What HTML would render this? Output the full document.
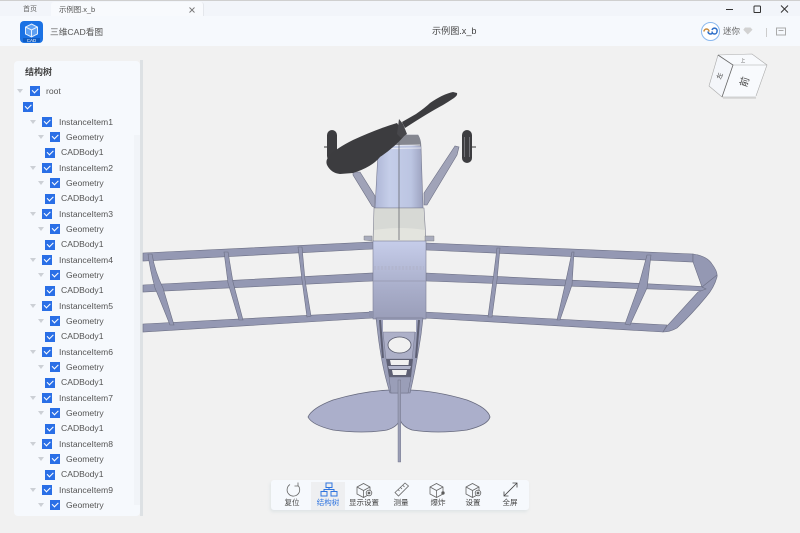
<!DOCTYPE html>
<html><head><meta charset="utf-8">
<style>
html,body{margin:0;padding:0}
body{width:800px;height:533px;overflow:hidden;background:#f1f1f1;position:relative;font-family:"Liberation Sans","Noto Sans CJK SC",sans-serif;color:#444}
.a{position:absolute;white-space:nowrap}
.t{position:absolute;white-space:nowrap;font-size:8.6px;line-height:12px;color:#555;font-family:"Liberation Sans","Noto Sans CJK SC",sans-serif}
.c{position:absolute;width:10px;height:10px;background:#2a6fe6}
.c::after{content:"";position:absolute;left:2px;top:2.2px;width:5px;height:2.5px;border-left:1px solid #fff;border-bottom:1px solid #fff;transform:rotate(-45deg)}
.ar{position:absolute;width:0;height:0;border-left:3.5px solid transparent;border-right:3.5px solid transparent;border-top:4px solid #ccd0d5}
.l{position:absolute;font-size:7.5px;line-height:10px;top:497.5px;color:#444;text-align:center;width:50px}
</style></head><body>
<div class="a" style="left:0;top:0;width:800px;height:46px;background:#f6f9fd"></div>
<div class="a" style="left:0;top:0;width:800px;height:16px;background:#f2f5fa;border-top:1px solid #cfcfcf;box-sizing:border-box"></div>
<div class="a" style="left:51px;top:2px;width:152px;height:14px;background:#f8fafd;border-radius:3px 3px 0 0;border-right:1px solid #e4e7ec"></div>
<div class="a" style="left:23px;top:4px;font-size:7px;line-height:12px;color:#666">首页</div>
<div class="a" style="left:59px;top:4px;font-size:7.4px;line-height:12px;color:#555">示例图.x_b</div>
<svg class="a" style="left:188px;top:6px" width="8" height="8"><path d="M1.500 1.500l5 5M6.500 1.500l-5 5" stroke="#777" stroke-width=".9"/></svg>
<svg class="a" style="left:725px;top:3px" width="70" height="12" fill="none" stroke="#333" stroke-width="1"><path d="M1 6.500h7"/><rect x="29" y="3" width="6.500" height="6.500" rx=".8"/><path d="M56 2.500l7 7M63 2.500l-7 7"/></svg>

<svg class="a" style="left:20px;top:21px" width="24" height="23"><rect width="23" height="22" rx="4" fill="#1b72e4"/><path d="M11.500 3l6 3v7l-6 3-6-3V6z" fill="#5ea0f2" stroke="#e6f0fe" stroke-width="1"/><path d="M11.500 9v7M5.500 6l6 3 6-3" stroke="#e6f0fe" fill="none"/><rect x="3" y="17" width="17" height="4" fill="#0f5cc4"/><text x="11.500" y="20.800" font-size="4.500" fill="#fff" text-anchor="middle" font-family="Liberation Sans">CAD</text></svg>
<div class="a" style="left:50px;top:26px;font-size:8.7px;line-height:13px;color:#555">三维CAD看图</div>
<div class="a" style="left:432px;top:25px;font-size:9.100px;line-height:13px;color:#444">示例图.x_b</div>
<svg class="a" style="left:700px;top:21px" width="22" height="21"><circle cx="10.500" cy="10.500" r="9" fill="#fff" stroke="#8ab8ee" stroke-width="1"/><path d="M4 10.500a2.500 2.500 0 0 1 5 0" fill="none" stroke="#c98a3a" stroke-width="1.500"/><path d="M8 10.500a2.500 2.500 0 0 0 4.500 1.500M12 9a2.500 2.500 0 0 1 5 1.500 2.500 2.500 0 0 1-5 0" fill="none" stroke="#2e6fc9" stroke-width="1.500"/></svg>
<div class="a" style="left:723px;top:25px;font-size:8.500px;line-height:13px;color:#666">迷你</div>
<svg class="a" style="left:743px;top:27px" width="10" height="8"><path d="M2 .5h5.500l2 2.200-4.700 4.800L.3 2.700z" fill="#d2d2d2"/></svg>
<div class="a" style="left:766px;top:28px;width:1px;height:9px;background:#ccc"></div>
<svg class="a" style="left:776px;top:27px" width="10" height="9" fill="none" stroke="#aaa" stroke-width="1"><rect x=".5" y="1" width="9" height="7"/><path d="M2.500 3.500h5"/></svg>

<!-- tree panel -->
<div class="a" style="left:14px;top:61px;width:126px;height:455px;background:#f6f9fd;border-radius:4px"></div>
<div class="a" style="left:134px;top:135px;width:6px;height:370px;background:#f1f4f8"></div>
<div class="a" style="left:140px;top:60px;width:3px;height:456px;background:#dde1e4"></div>
<div class="a" style="left:25px;top:66px;font-size:9px;line-height:13px;font-weight:bold;color:#444">结构树</div>

<div class="ar" style="left:17px;top:89px"></div><div class="c" style="left:30px;top:86px"></div><div class="t" style="left:46px;top:85px">root</div>
<div class="c" style="left:23px;top:102px"></div>

<div class="ar" style="left:30px;top:120px"></div><div class="c" style="left:42px;top:117px"></div><div class="t" style="left:59px;top:116px">InstanceItem1</div>
<div class="ar" style="left:38px;top:135px"></div><div class="c" style="left:50px;top:132px"></div><div class="t" style="left:66px;top:131px">Geometry</div>
<div class="c" style="left:45px;top:147.500px"></div><div class="t" style="left:61px;top:146px">CADBody1</div>

<div class="ar" style="left:30px;top:166px"></div><div class="c" style="left:42px;top:163px"></div><div class="t" style="left:59px;top:162px">InstanceItem2</div>
<div class="ar" style="left:38px;top:181px"></div><div class="c" style="left:50px;top:178px"></div><div class="t" style="left:66px;top:177px">Geometry</div>
<div class="c" style="left:45px;top:193.500px"></div><div class="t" style="left:61px;top:192px">CADBody1</div>

<div class="ar" style="left:30px;top:212px"></div><div class="c" style="left:42px;top:209px"></div><div class="t" style="left:59px;top:208px">InstanceItem3</div>
<div class="ar" style="left:38px;top:227px"></div><div class="c" style="left:50px;top:224px"></div><div class="t" style="left:66px;top:223px">Geometry</div>
<div class="c" style="left:45px;top:239.500px"></div><div class="t" style="left:61px;top:238px">CADBody1</div>

<div class="ar" style="left:30px;top:258px"></div><div class="c" style="left:42px;top:255px"></div><div class="t" style="left:59px;top:254px">InstanceItem4</div>
<div class="ar" style="left:38px;top:273px"></div><div class="c" style="left:50px;top:270px"></div><div class="t" style="left:66px;top:269px">Geometry</div>
<div class="c" style="left:45px;top:285.500px"></div><div class="t" style="left:61px;top:284px">CADBody1</div>

<div class="ar" style="left:30px;top:304px"></div><div class="c" style="left:42px;top:301px"></div><div class="t" style="left:59px;top:300px">InstanceItem5</div>
<div class="ar" style="left:38px;top:319px"></div><div class="c" style="left:50px;top:316px"></div><div class="t" style="left:66px;top:315px">Geometry</div>
<div class="c" style="left:45px;top:331.500px"></div><div class="t" style="left:61px;top:330px">CADBody1</div>

<div class="ar" style="left:30px;top:350px"></div><div class="c" style="left:42px;top:347px"></div><div class="t" style="left:59px;top:346px">InstanceItem6</div>
<div class="ar" style="left:38px;top:365px"></div><div class="c" style="left:50px;top:362px"></div><div class="t" style="left:66px;top:361px">Geometry</div>
<div class="c" style="left:45px;top:377.500px"></div><div class="t" style="left:61px;top:376px">CADBody1</div>

<div class="ar" style="left:30px;top:396px"></div><div class="c" style="left:42px;top:393px"></div><div class="t" style="left:59px;top:392px">InstanceItem7</div>
<div class="ar" style="left:38px;top:411px"></div><div class="c" style="left:50px;top:408px"></div><div class="t" style="left:66px;top:407px">Geometry</div>
<div class="c" style="left:45px;top:423.500px"></div><div class="t" style="left:61px;top:422px">CADBody1</div>

<div class="ar" style="left:30px;top:442px"></div><div class="c" style="left:42px;top:439px"></div><div class="t" style="left:59px;top:438px">InstanceItem8</div>
<div class="ar" style="left:38px;top:457px"></div><div class="c" style="left:50px;top:454px"></div><div class="t" style="left:66px;top:453px">Geometry</div>
<div class="c" style="left:45px;top:469.500px"></div><div class="t" style="left:61px;top:468px">CADBody1</div>

<div class="ar" style="left:30px;top:488px"></div><div class="c" style="left:42px;top:485px"></div><div class="t" style="left:59px;top:484px">InstanceItem9</div>
<div class="ar" style="left:38px;top:503px"></div><div class="c" style="left:50px;top:500px"></div><div class="t" style="left:66px;top:499px">Geometry</div>

<!-- model -->
<svg class="a" style="left:0;top:0" width="800" height="533">
<defs>
<linearGradient id="body" x1="0" y1="0" x2="0" y2="1"><stop offset="0" stop-color="#c6cdea"/><stop offset=".6" stop-color="#a9aeca"/><stop offset="1" stop-color="#9a9eb9"/></linearGradient>
<linearGradient id="cowl" x1="0" y1="0" x2="1" y2="0"><stop offset="0" stop-color="#aeb6d6"/><stop offset=".3" stop-color="#c5cee9"/><stop offset=".75" stop-color="#bcc5e2"/><stop offset="1" stop-color="#9ca2bf"/></linearGradient>
</defs>
<g fill="#9498b3" stroke="#6c6f84" stroke-width=".6">
<!-- left wing spars -->
<path d="M143 253L373 242V249L143 261Z"/>
<path d="M143 285L373 273V281L143 292Z"/>
<path d="M143 324L373 312V318L143 332Z"/>
<!-- left ribs -->
<path d="M148 254L152 254Q155 272 163 288L174 325L170 325Q160 300 155 288Q150 270 148 254Z"/>
<path d="M224 252L228 252L233 282L243 320L239 320L228 283Z"/>
<path d="M298 247L302 247L305 280L311 316L307 317L302 280Z"/>
<!-- right wing spars -->
<path d="M426 243L693 254L693 262L426 250Z"/>
<path d="M426 273L712 287L708 291L426 281Z"/>
<path d="M424 312L667 325L663 332L424 318Z"/>
<!-- right ribs -->
<path d="M497 248L500 248L497 280L492 317L488 317L493 280Z"/>
<path d="M572 252L574 252L572 285L560 320L557 320L565 285Z"/>
<path d="M647 255L651 255L647 288L630 325L625 324L638 288Z"/>
<!-- tip -->
<path d="M693 254Q707 256 712 264Q718 272 717 277Q714 288 706 297Q692 314 677 328Q670 332 663 332L667 326L698 292L706 289L702 287L693 262Z"/>
</g>
<path d="M702 287L717 275" stroke="#6c6f84" stroke-width=".6" fill="none"/>
<!-- gear struts -->
<g fill="#a0a3b8" stroke="#6c6f84" stroke-width=".6">
<path d="M353 172L360 172L375 196V208L372 206L353 175Z"/>
<path d="M424 193L455 146L459 147L457 155L427 205H424Z"/>
</g>
<!-- wheels -->
<rect x="327" y="130" width="10" height="31" rx="5" fill="#3d3d40"/>
<rect x="462" y="130" width="10" height="33" rx="5" fill="#3d3d40"/>
<path d="M464.500 137v20M469.500 137v20" stroke="#808085" stroke-width=".8"/>
<path d="M324 147h3M472 147h4" stroke="#777" stroke-width="1.500"/>
<!-- cowl -->
<path d="M375 208L378 153L390 145L399 135L418 135Q421 140 421 147L423 208Z" fill="url(#cowl)" stroke="#777a90" stroke-width=".6"/>
<path d="M387 146L399 135L418 135Q421 139 421 146Q400 144 387 146Z" fill="#858790"/>
<path d="M384 146Q402 145 420 145M382 149Q402 148 421 148" stroke="#f2f2f6" stroke-width=".7" fill="none"/>
<!-- beige -->
<path d="M374 208H424L426 241H373Z" fill="#d7d9d5" stroke="#808292" stroke-width=".6"/>
<path d="M374 230Q400 226 425 230V241H374Z" fill="#e3e4de"/>
<path d="M364 240V236H372V241ZM425 241V236H434V241Z" fill="#a9acbd" stroke="#777" stroke-width=".4"/>
<!-- centre section -->
<rect x="373" y="241" width="53" height="78" fill="url(#body)" stroke="#7c7f95" stroke-width=".6"/>
<path d="M373 281H426" stroke="#9497ae" stroke-width=".8"/>
<path d="M374 268h50" stroke="#b2b6cf" stroke-width="4" stroke-dasharray="2 1.500"/>
<rect x="369" y="311" width="5" height="6" fill="#9094ad"/>
<path d="M399 135V240" stroke="#66686f" stroke-width=".8"/>
<!-- tail -->
<path d="M390 390L400 391 410 390Q437 391 467 400Q488 408 490 417Q488 425 467 430Q437 434 412 430Q403 427 400 420Q397 427 387 430Q363 434 333 430Q312 425 308 417Q312 408 333 400Q363 391 390 390Z" fill="#abafcb" stroke="#66697d" stroke-width=".8"/>
<!-- rear fuselage -->
<path d="M376 318H423L421 335Q416 368 410 393H390Q382 368 378 335Z" fill="#9a9eb8" stroke="#6c6f84" stroke-width=".6"/>
<path d="M380 320L383 358M419 320L416 358" stroke="#5e6074" stroke-width="2" fill="none"/>
<path d="M383 320H416V332H383Z" fill="#f1f1f1"/>
<path d="M383 332H415L412 359H386Z" fill="#adb0c8" stroke="#6c6f84" stroke-width=".4"/>
<ellipse cx="399.500" cy="345" rx="11.500" ry="8" fill="#f1f1f1" stroke="#55586a" stroke-width=".8"/>
<path d="M386 359H413L411 377H389Z" fill="#5e6074"/>
<path d="M390 360H409L408.500 365H391Z" fill="#f1f1f1"/>
<path d="M388 366H411L410 369H389Z" fill="#b3b6cc"/>
<path d="M392 370H407L406 375H393Z" fill="#f1f1f1"/>
<path d="M389 377H411L408 393H391Z" fill="#9a9eb8" stroke="#6c6f84" stroke-width=".5"/>
<rect x="398" y="380" width="2.800" height="82" fill="#9a9db5" stroke="#6c6f84" stroke-width=".4"/>
<!-- prop -->
<path d="M397 123Q377 129 353 140Q337 148 330 155Q325 160 327 165Q331 173 340 174L353 173Q372 167 380 157Q395 147 405 135Z" fill="#3c3c3f"/>
<path d="M402 122L416 114Q426 107 430 103Q443 94 453 92L457 93Q458 95 454 98Q448 102 443 105Q428 113 405 128Z" fill="#3c3c3f"/>
<path d="M399 119L403 124 407 134 401 138 397 134Z" fill="#47474b"/>
</svg>

<!-- view cube -->
<svg class="a" style="left:700px;top:45px" width="75" height="60">
<path d="M18 10L52 9 67 20 56 52 22 52 9 41Z" fill="#f6f8fc"/>
<path d="M18 10L52 9 67 20H33Z M22 52L33 20 67 20 56 52Z" fill="#f8fafd"/>
<path d="M18 10L33 20 22 52 9 41Z" fill="#f4f6fa"/>
<path d="M18 10L52 9 67 20 56 51M33 20H67M18 10L9 41 22 52 56 52" fill="none" stroke="#aaa" stroke-width=".6"/>
<path d="M18 10L33 20 22 52" fill="none" stroke="#666" stroke-width=".8"/>
<path d="M23 53H56" stroke="#d4d4d4" stroke-width="1.500"/>
<text x="45" y="40" font-size="10" fill="#444" text-anchor="middle" transform="rotate(-72 45 37)" font-family="Noto Sans CJK SC,sans-serif">前</text>
<text x="20" y="33" font-size="6.500" fill="#444" text-anchor="middle" transform="rotate(-72 20 31)" font-family="Noto Sans CJK SC,sans-serif">左</text>
<text x="43" y="17" font-size="4.500" fill="#555" text-anchor="middle" font-family="Noto Sans CJK SC,sans-serif">上</text>
</svg>

<!-- toolbar -->
<div class="a" style="left:271px;top:480px;width:258px;height:30px;background:#f6f9fd;border-radius:3px;box-shadow:-1px 2px 3px #dfe4e6"></div>
<div class="a" style="left:311px;top:482px;width:34px;height:28px;background:#eeeff1"></div>
<svg class="a" style="left:271px;top:480px" width="258" height="20" fill="none" stroke="#666" stroke-width=".8">
<path d="M27 5.500A6.300 6.300 0 1 1 19 4.500M27 2.500V6H23.500"/>
<g stroke="#2f74df" stroke-width="1"><rect x="55" y="3" width="6" height="4.500"/><rect x="50" y="11.500" width="6" height="4.500"/><rect x="60" y="11.500" width="6" height="4.500"/><path d="M58 7.500v2M53 11.500v-2h10v2"/></g>
<g><path d="M86 7l6.500-3.500L99 7v7l-6.500 3.500L86 14zM86 7l6.500 3.500L99 7M92.500 10.500v7"/><circle cx="98" cy="13" r="2.800" fill="#f6f9fd"/><circle cx="98" cy="13" r="1" fill="#666"/></g>
<g><path d="M124 12.500L134 3l3.500 3L127.500 16zM127 9.500l1.500 1.500M129.500 7.500l1.500 1.500M132 5.500l1.500 1.500"/></g>
<g><path d="M159 7l6.500-3.500L172 7v7l-6.500 3.500L159 14zM159 7l6.500 3.500L172 7M165.500 10.500v7"/><circle cx="172" cy="13" r="1.300" fill="#555"/></g>
<g><path d="M195 7l6.500-3.500L208 7v7l-6.500 3.500L195 14zM195 7l6.500 3.500L208 7M201.500 10.500v7"/><circle cx="207" cy="13" r="2.800" fill="#f6f9fd"/><circle cx="207" cy="13" r="1" fill="#666"/></g>
<g stroke="#444"><path d="M233 16L246 3M241.500 3H246V7.500M233 11.500V16H237.500"/></g>
</svg>
<div class="l" style="left:267px">复位</div>
<div class="l" style="left:303px;color:#2f74df">结构树</div>
<div class="l" style="left:339px">显示设置</div>
<div class="l" style="left:376px">测量</div>
<div class="l" style="left:413px">爆炸</div>
<div class="l" style="left:448px">设置</div>
<div class="l" style="left:485px">全屏</div>
</body></html>
